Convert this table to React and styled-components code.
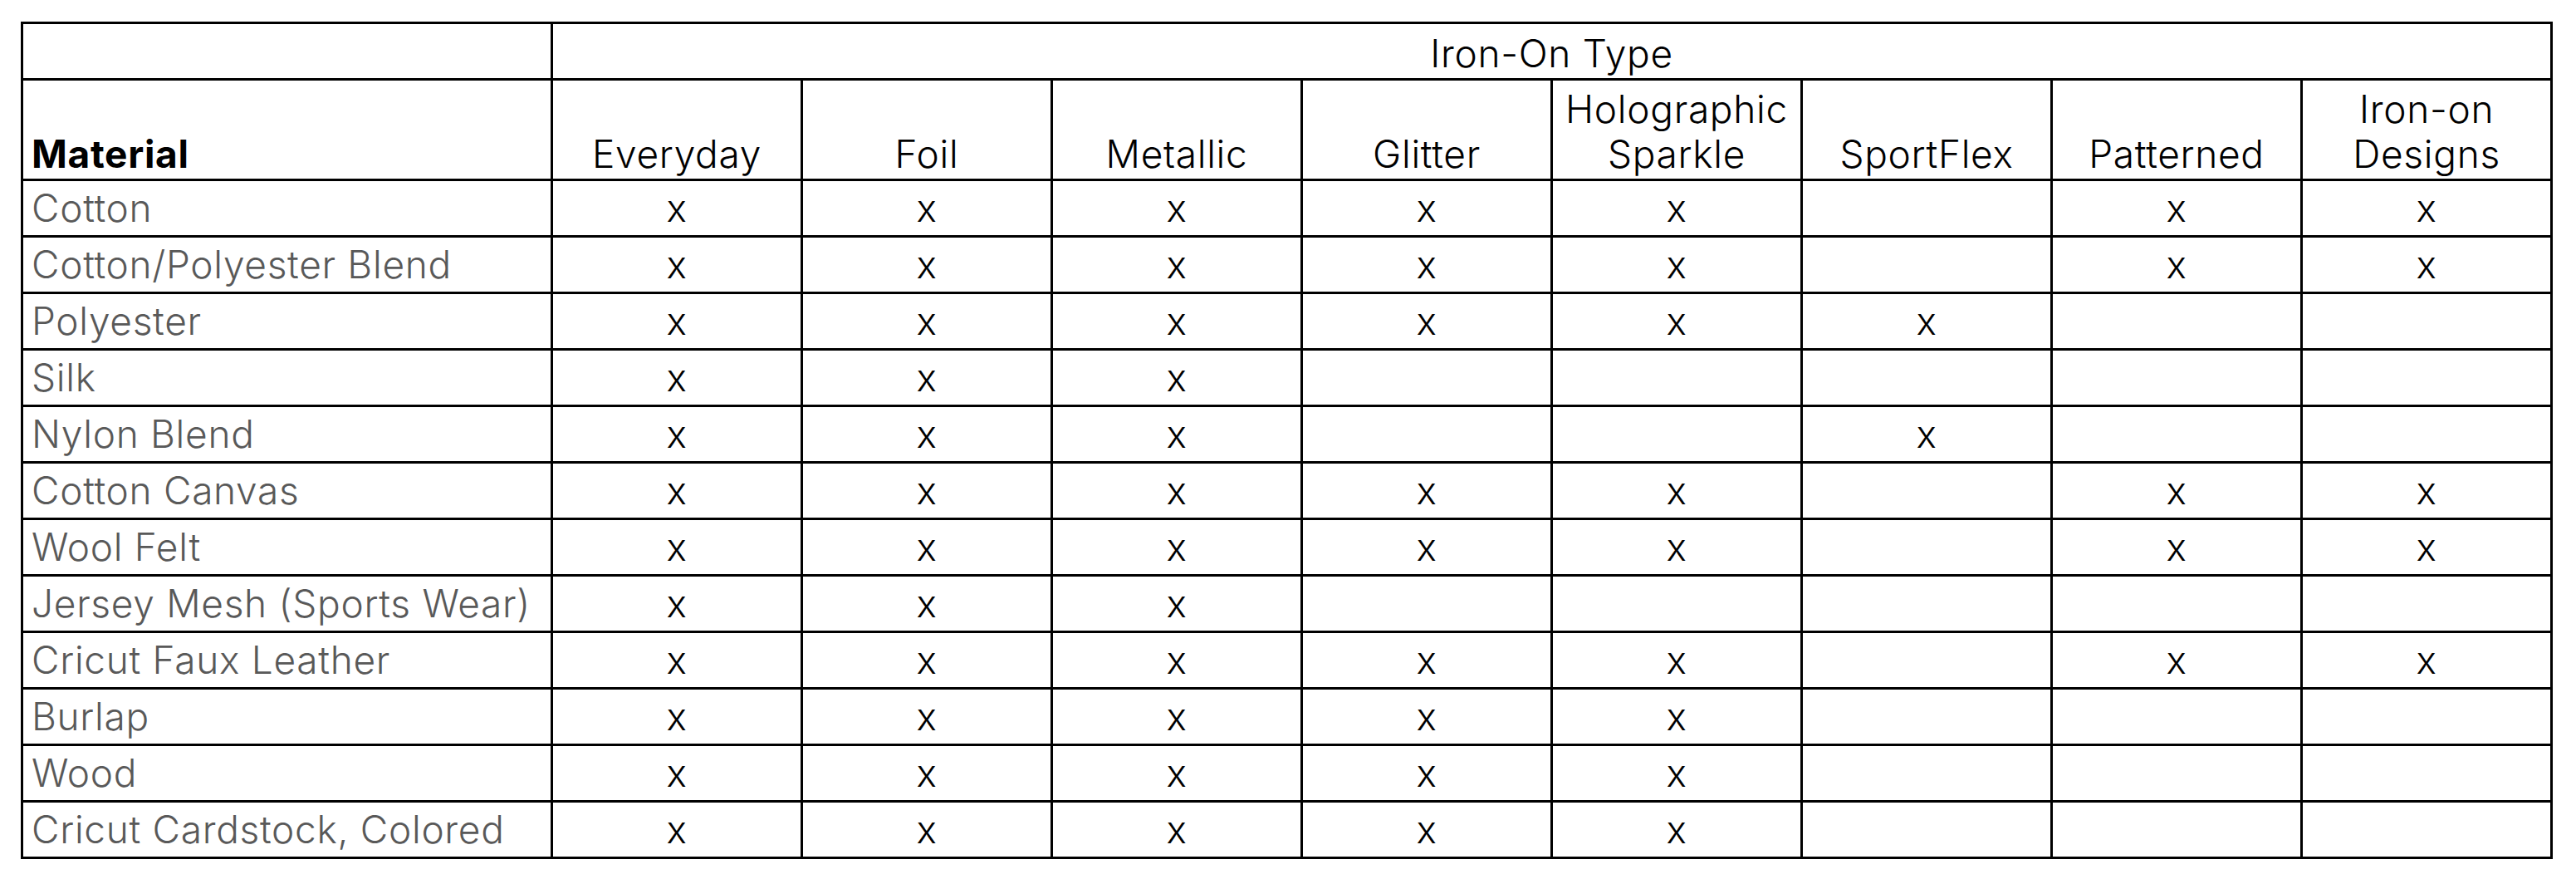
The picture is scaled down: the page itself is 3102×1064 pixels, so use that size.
import React from 'react'
import styled, { createGlobalStyle } from 'styled-components'

const TYPES = [
  ['Everyday'],
  ['Foil'],
  ['Metallic'],
  ['Glitter'],
  ['Holographic', 'Sparkle'],
  ['SportFlex'],
  ['Patterned'],
  ['Iron-on', 'Designs'],
]

// 1 = works with that iron-on type
const MATERIALS = [
  ['Cotton', [1, 1, 1, 1, 1, 0, 1, 1]],
  ['Cotton/Polyester Blend', [1, 1, 1, 1, 1, 0, 1, 1]],
  ['Polyester', [1, 1, 1, 1, 1, 1, 0, 0]],
  ['Silk', [1, 1, 1, 0, 0, 0, 0, 0]],
  ['Nylon Blend', [1, 1, 1, 0, 0, 1, 0, 0]],
  ['Cotton Canvas', [1, 1, 1, 1, 1, 0, 1, 1]],
  ['Wool Felt', [1, 1, 1, 1, 1, 0, 1, 1]],
  ['Jersey Mesh (Sports Wear)', [1, 1, 1, 0, 0, 0, 0, 0]],
  ['Cricut Faux Leather', [1, 1, 1, 1, 1, 0, 1, 1]],
  ['Burlap', [1, 1, 1, 1, 1, 0, 0, 0]],
  ['Wood', [1, 1, 1, 1, 1, 0, 0, 0]],
  ['Cricut Cardstock, Colored', [1, 1, 1, 1, 1, 0, 0, 0]],
]

export default function App() {
  return (
    <>
      <GlobalStyle />
      <Page>
        <Chart>
          <colgroup>
            <Col $width={638} />
            {TYPES.map((t) => (
              <Col key={t.join(' ')} $width={301} />
            ))}
          </colgroup>
          <thead>
            <tr>
              <HeadCell $height={62} />
              <HeadCell $height={62} colSpan={TYPES.length}>
                Iron-On Type
              </HeadCell>
            </tr>
            <tr>
              <HeadCell $height={115} $left $bold>
                Material
              </HeadCell>
              {TYPES.map((lines) => (
                <HeadCell key={lines.join(' ')} $height={115}>
                  {lines.map((l, i) => (
                    <React.Fragment key={l}>
                      {i > 0 && <br />}
                      {l}
                    </React.Fragment>
                  ))}
                </HeadCell>
              ))}
            </tr>
          </thead>
          <tbody>
            {MATERIALS.map(([name, marks]) => (
              <tr key={name}>
                <NameCell>{name}</NameCell>
                {marks.map((m, i) => (
                  <MarkCell key={i}>{m ? 'x' : ''}</MarkCell>
                ))}
              </tr>
            ))}
          </tbody>
        </Chart>
      </Page>
    </>
  )
}

const GlobalStyle = createGlobalStyle`
  body {
    margin: 0;
    background: #fff;
    font-family: Inter, "Open Sans", sans-serif;
  }
`

const Page = styled.div`
  padding: 26px 0 0 25px;
`

const Chart = styled.table`
  width: 3049px;
  table-layout: fixed;
  border-collapse: separate;
  border-spacing: 0;
  border-top: 3px solid #000;
  border-left: 3px solid #000;
  font-size: 46px;
  font-weight: 300;
  letter-spacing: 0.7px;
`

const Col = styled.col`
  width: ${(p) => p.$width}px;
`

const Cell = styled.td`
  padding: 0;
  border-right: 3px solid #000;
  border-bottom: 3px solid #000;
  white-space: nowrap;
`

const HeadCell = styled(Cell).attrs({ as: 'th' })`
  height: ${(p) => p.$height}px;
  padding: 0 0 3px ${(p) => (p.$left ? '10px' : '0')};
  vertical-align: bottom;
  line-height: 54px;
  text-align: ${(p) => (p.$left ? 'left' : 'center')};
  font-weight: ${(p) => (p.$bold ? 700 : 300)};
  color: #000;
`

const NameCell = styled(Cell)`
  height: 65px;
  padding-left: 10px;
  line-height: 65px;
  color: #595959;
`

const MarkCell = styled(Cell)`
  height: 65px;
  line-height: 65px;
  text-align: center;
  color: #000;
`
